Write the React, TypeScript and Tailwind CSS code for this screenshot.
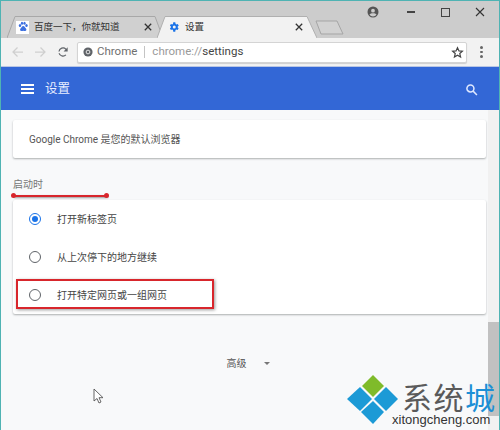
import React from "react";

const font = { fontFamily: '"Roboto","Noto Sans CJK SC",sans-serif' };

function Gear() {
  return (
    <svg width="12" height="12" viewBox="0 0 24 24" fill="#1a73e8">
      <path d="M19.4 13a7.5 7.5 0 0 0 0-2l2.100-1.600-2-3.500-2.500 1a7.500 7.500 0 0 0-1.700-1L14.500 2.500h-4L10 5.900a7.500 7.500 0 0 0-1.700 1l-2.500-1-2 3.500L5.900 11a7.500 7.500 0 0 0 0 2l-2.100 1.600 2 3.500 2.500-1a7.500 7.500 0 0 0 1.700 1l.5 3.400h4l.5-3.400a7.500 7.500 0 0 0 1.700-1l2.500 1 2-3.500zM12.500 15a3 3 0 1 1 0-6 3 3 0 0 1 0 6z" />
    </svg>
  );
}

function Paw() {
  return (
    <span className="flex h-[13px] w-[13px] items-center justify-center bg-white">
      <svg width="12" height="12" viewBox="0 0 24 24" fill="#3b6fe0">
        <ellipse cx="6" cy="9" rx="2.400" ry="3.200" />
        <ellipse cx="10" cy="4.500" rx="2.300" ry="3.200" />
        <ellipse cx="15" cy="4.500" rx="2.300" ry="3.200" />
        <ellipse cx="19" cy="9" rx="2.400" ry="3.200" />
        <path d="M12.500 10c-2.500 0-3 3-5 4.500-2 1.500-2 5.500 1.500 5.500 1.500 0 2.300-.5 3.500-.5s2 .5 3.500.5c3.500 0 3.500-4 1.500-5.500-2-1.500-2.500-4.500-5-4.500z" />
      </svg>
    </span>
  );
}

function X({ size = 8, w = 1.6, c = "#333" }: { size?: number; w?: number; c?: string }) {
  return (
    <svg width={size} height={size} viewBox="0 0 10 10" stroke={c} strokeWidth={w} fill="none">
      <path d="M1 1l8 8M9 1l-8 8" />
    </svg>
  );
}

function Radio({ on }: { on?: boolean }) {
  return (
    <span
      className={
        "flex h-3 w-3 items-center justify-center rounded-full border-[1.5px] " +
        (on ? "border-[#1a73e8]" : "border-[#5f6368]")
      }
    >
      {on && <span className="h-1.5 w-1.5 rounded-full bg-[#1a73e8]" />}
    </span>
  );
}

function Row({ on, text }: { on?: boolean; text: string }) {
  return (
    <div className="flex h-[38px] items-center gap-[16px] pl-[16px] text-[10px] text-[#444]">
      <Radio on={on} />
      <span>{text}</span>
    </div>
  );
}

export default function App() {
  return (
    <div className="relative h-[430px] w-[500px] overflow-hidden border border-b-0 border-[#4fb3b3] bg-[#f8f9fa]" style={font}>
      {/* tab strip */}
      <div className="relative flex h-[37px] items-end bg-[#cccccc] pl-[6px]">
        <div className="relative flex h-[22px] w-[150px] shrink-0 items-center pl-[9px] text-[9.5px] text-[#333]">
          <svg className="absolute inset-0" width="158" height="22" viewBox="0 0 158 22">
            <path d="M0 22 L8 0.5 H148 L156 22" fill="#d0d0d0" stroke="#a8a8a8" strokeWidth="1" />
          </svg>
          <span className="relative flex items-center gap-[5px]">
            <Paw />
            <span className="w-[105px] whitespace-nowrap">百度一下，你就知道</span>
            <X />
          </span>
        </div>
        <div className="relative flex h-[22px] w-[160px] shrink-0 items-center pl-[11px] text-[9.5px] text-[#333]">
          <svg className="absolute inset-0" width="160" height="22" viewBox="0 0 160 22">
            <path d="M0 22 L8 0.5 H150 L160 22 Z" fill="#f2f2f2" />
            <path d="M0 22 L8 0.5 H150 L160 22" fill="none" stroke="#b0b0b0" strokeWidth="1" />
          </svg>
          <span className="relative flex items-center gap-[5px]">
            <Gear />
            <span className="w-[105px] whitespace-nowrap">设置</span>
            <X />
          </span>
        </div>
        <svg className="mb-[3px] -ml-[2px] shrink-0" width="29" height="15" viewBox="0 0 29 15">
          <path d="M1 1 H22 L28 14 H6 Z" fill="#d2d2d2" stroke="#a5a5a5" />
        </svg>
        <div className="absolute right-[14px] top-[2px] flex h-[18px] items-center">
          <svg className="mr-[28px]" width="12" height="12" viewBox="0 0 24 24" fill="#555">
            <path d="M12 1a11 11 0 1 0 0 22 11 11 0 0 0 0-22zm0 4.500a3.800 3.800 0 1 1 0 7.600 3.800 3.800 0 0 1 0-7.600zm0 15.500a8.800 8.800 0 0 1-7-3.500c1-2.200 4.500-3 7-3s6 .8 7 3a8.800 8.800 0 0 1-7 3.500z" />
          </svg>
          <span className="mr-[26px] h-[1.5px] w-[8px] bg-[#444]" />
          <span className="mr-[25px] h-[9px] w-[9px] border border-[#444]" />
          <X size={10} w={1.1} c="#333" />
        </div>
      </div>
      {/* toolbar */}
      <div className="flex h-[28px] items-center bg-[#f2f2f2]">
        <svg className="ml-[11px]" width="12" height="12" viewBox="0 0 24 24" fill="none" stroke="#cfcfcf" strokeWidth="2.5">
          <path d="M22 12H3M11 3l-9 9 9 9" />
        </svg>
        <svg className="ml-[10px]" width="12" height="12" viewBox="0 0 24 24" fill="none" stroke="#cfcfcf" strokeWidth="2.5">
          <path d="M2 12h19M13 3l9 9-9 9" />
        </svg>
        <svg className="ml-[10px]" width="14" height="14" viewBox="0 0 24 24" fill="#5f6368">
          <path d="M17.650 6.350A8 8 0 0 0 4.070 11h2.020a6 6 0 0 1 10.140-3.240L13 11h7V4zM12 18a6 6 0 0 1-5.660-4H4.260a8 8 0 0 0 13.390 3.650L16.230 16.230A6 6 0 0 1 12 18z" />
        </svg>
        <div className="ml-[7px] flex h-[21px] w-[390px] items-center rounded-[2px] border border-[#d4d4d4] bg-white pl-[5px] text-[11.5px] shadow-[0_1px_1px_rgba(0,0,0,0.15)]">
          <svg width="10" height="10" viewBox="0 0 24 24">
            <circle cx="12" cy="12" r="11" fill="#5f6368" />
            <circle cx="12" cy="12" r="4.500" fill="#5f6368" stroke="#fff" strokeWidth="2" />
          </svg>
          <span className="ml-[4px] text-[#6f6f6f]">Chrome</span>
          <span className="mx-[7px] h-[12px] w-px bg-[#c4c4c4]" />
          <span className="text-[#9a9a9a]">chrome://</span>
          <span className="text-[#444]">settings</span>
          <svg className="ml-auto mr-[2px]" width="13" height="13" viewBox="0 0 24 24" fill="none" stroke="#444" strokeWidth="2.2">
            <path d="M12 3l2.700 6 6.300.6-4.800 4.300 1.500 6.500L12 17l-5.700 3.400 1.500-6.500L3 9.600 9.300 9z" />
          </svg>
        </div>
        <div className="ml-[13px] flex flex-col gap-[2px]">
          <span className="h-[2.5px] w-[2.5px] rounded-full bg-[#666]" />
          <span className="h-[2.5px] w-[2.5px] rounded-full bg-[#666]" />
          <span className="h-[2.5px] w-[2.5px] rounded-full bg-[#666]" />
        </div>
      </div>
      {/* blue header */}
      <div className="flex h-[44px] items-center justify-between border-t border-[#b9c6e4] bg-[#3367d6] pl-[20px] pr-[21px] pt-[1px] text-white">
        <div className="flex items-center gap-[11px]">
          <div className="flex w-[13px] flex-col gap-[2.5px]">
            <span className="h-[1.5px] bg-white" />
            <span className="h-[1.5px] bg-white" />
            <span className="h-[1.5px] bg-white" />
          </div>
          <span className="text-[12.5px] text-[#e8eeff]">设置</span>
        </div>
        <svg width="13" height="13" viewBox="0 0 24 24" fill="none" stroke="#dfe8ff" strokeWidth="2.8">
          <circle cx="10" cy="10" r="6.500" />
          <path d="M15 15l7 7" />
        </svg>
      </div>
      {/* content */}
      <div className="flex h-[320px]">
        <div className="w-[486px] pl-[12px]">
          <div className="mt-[10px] flex h-[38px] w-[473px] items-center rounded-[2px] bg-white pl-[16px] text-[10px] text-[#555] shadow-[0_1px_2px_rgba(60,64,67,0.4)]">
            Google Chrome 是您的默认浏览器
          </div>
          <div className="mt-[21px] text-[10px] leading-[12px] text-[#777]">启动时</div>
          <div className="mt-[9px] w-[473px] rounded-[2px] bg-white shadow-[0_1px_2px_rgba(60,64,67,0.4)]">
            <Row on text="打开新标签页" />
            <Row text="从上次停下的地方继续" />
            <Row text="打开特定网页或一组网页" />
          </div>
          <div className="mt-[42px] flex items-center justify-center gap-[17px] pr-[4px] text-[10px] text-[#555]">
            <span>高级</span>
            <span className="h-0 w-0 border-x-[3.5px] border-t-[3.5px] border-x-transparent border-t-[#777]" />
          </div>
        </div>
        <div className="ml-[1px] flex w-[11px] flex-col bg-[#f1f1f1]">
          <div className="mt-[212px] h-[94px] bg-[#c1c1c1]" />
        </div>
      </div>

      {/* red annotations */}
      <div className="absolute left-[12px] top-[194px] h-[1.5px] w-[94px] bg-[#d8262c] shadow-[1px_1px_2px_rgba(0,0,0,0.4)]" />
      <span className="absolute left-[10px] top-[192px] h-[5px] w-[5px] rounded-full bg-[#d8262c]" />
      <span className="absolute left-[103px] top-[192px] h-[5px] w-[5px] rounded-full bg-[#d8262c]" />
      <div className="absolute left-[15px] top-[278px] h-[30px] w-[198px] border-2 border-[#d8262c] shadow-[1px_1px_3px_rgba(0,0,0,0.4)]" />

      {/* cursor */}
      <svg className="absolute left-[92px] top-[387px]" width="12" height="17" viewBox="0 0 12 17" fill="#fff" stroke="#555" strokeWidth="0.9">
        <path d="M1 1v12l3-2.500 2 4.500 2-1-2-4.300h4z" />
      </svg>

      {/* watermark */}
      <div className="absolute left-[346px] top-[374px] h-[55px] w-[153px]">
        <svg className="absolute left-0 top-0" width="52" height="50" viewBox="0 0 52 50">
          <path d="M26 0l11 11-11 11-11-11z" fill="#7fbb2a" />
          <path d="M13 12l12 12-12 12L0 24z" fill="#1c9ad6" />
          <path d="M39 12l12 12-12 12-12-12z" fill="#1c9ad6" />
          <path d="M26 26l11 11-11 12-12-12z" fill="#1c9ad6" />
        </svg>
        <div className="absolute left-[55px] top-[6px] flex text-[30px] leading-[30px] tracking-[1.5px]" style={{ fontFamily: '"Noto Sans CJK SC",sans-serif' }}>
          <span className="text-[#5a5a5a]">系统</span>
          <span className="text-[#1c8fd6]">城</span>
        </div>
        <div className="absolute left-[45px] top-[37px] whitespace-nowrap text-[13px] leading-[16px] text-[#333]" style={{ fontFamily: '"Liberation Sans",sans-serif' }}>
          xitongcheng.com
        </div>
      </div>
    </div>
  );
}
